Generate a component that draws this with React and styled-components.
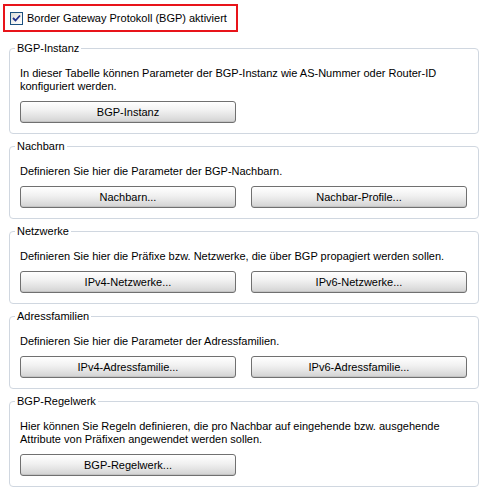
import { createGlobalStyle, styled } from "styled-components";

const GlobalStyle = createGlobalStyle`
    html, body {
        margin: 0;
        padding: 0;
        background: #ffffff;
    }
    body {
        font-family: "Liberation Sans", Arial, sans-serif;
        font-size: 11px;
        color: #000000;
    }
`

const Page = styled.div`
    width: 486px;
    height: 493px;
    padding: 4px 0 0 3px;
    box-sizing: border-box;
    display: flex;
    flex-direction: column;
    align-items: flex-start;
`

const ActivateRow = styled.label`
    display: flex;
    align-items: center;
    gap: 4px;
    width: 235px;
    height: 28px;
    box-sizing: border-box;
    padding-left: 5px;
    border: 2px solid #e8141a;
    margin-bottom: 10px;
    cursor: default;
`

const CheckBox = styled.span`
    display: inline-flex;
    align-items: center;
    justify-content: center;
    width: 13px;
    height: 13px;
    box-sizing: border-box;
    border: 1px solid #1c5180;
    background: linear-gradient(135deg, #dcdcd7 0%, #f5f5f2 60%, #ffffff 100%);
`

const Groups = styled.div`
    display: flex;
    flex-direction: column;
    gap: 6px;
    margin-left: 6px;
`

const Group = styled.fieldset`
    width: 470px;
    box-sizing: border-box;
    margin: 0;
    padding: 12px 10px 10px 10px;
    border: 1px solid #d0d7e0;
    border-radius: 4px;
`

const Title = styled.legend`
    padding: 0 2px;
    margin-left: -5px;
    line-height: 13px;
`

const Description = styled.p`
    margin: 0;
    line-height: 13px;
`

const ButtonRow = styled.div`
    display: flex;
    gap: 15px;
    margin-top: 8px;
`

const Button = styled.button`
    width: 216px;
    height: 22px;
    padding: 0;
    font-family: inherit;
    font-size: 11px;
    color: #000000;
    border: 1px solid #707070;
    border-radius: 3px;
    background: linear-gradient(#ffffff 0%, #f2f2f2 40%, #e3e3e3 70%, #d2d2d2 100%);
    box-shadow: inset 0 -1px 0 #c4c4c4;
`

const groups = [
    {
        title: "BGP-Instanz",
        text: "In dieser Tabelle können Parameter der BGP-Instanz wie AS-Nummer oder Router-ID konfiguriert werden.",
        buttons: ["BGP-Instanz"]
    },
    {
        title: "Nachbarn",
        text: "Definieren Sie hier die Parameter der BGP-Nachbarn.",
        buttons: ["Nachbarn...", "Nachbar-Profile..."]
    },
    {
        title: "Netzwerke",
        text: "Definieren Sie hier die Präfixe bzw. Netzwerke, die über BGP propagiert werden sollen.",
        buttons: ["IPv4-Netzwerke...", "IPv6-Netzwerke..."]
    },
    {
        title: "Adressfamilien",
        text: "Definieren Sie hier die Parameter der Adressfamilien.",
        buttons: ["IPv4-Adressfamilie...", "IPv6-Adressfamilie..."]
    },
    {
        title: "BGP-Regelwerk",
        text: "Hier können Sie Regeln definieren, die pro Nachbar auf eingehende bzw. ausgehende Attribute von Präfixen angewendet werden sollen.",
        buttons: ["BGP-Regelwerk..."]
    }
]

const CheckMark = () => (
    <svg width="9" height="9" viewBox="0 0 9 9">
        <path d="M1 4 L3.5 6.5 L8 1.5" fill="none" stroke="#21308c" strokeWidth="1.8" />
    </svg>
)

const App = () => {
    return (
        <>
            <GlobalStyle />
            <Page>
                <ActivateRow>
                    <CheckBox><CheckMark /></CheckBox>
                    <span>Border Gateway Protokoll (BGP) aktiviert</span>
                </ActivateRow>
                <Groups>
                    {groups.map(group => (
                        <Group key={group.title}>
                            <Title>{group.title}</Title>
                            <Description>{group.text}</Description>
                            <ButtonRow>
                                {group.buttons.map(label => (
                                    <Button key={label}>{label}</Button>
                                ))}
                            </ButtonRow>
                        </Group>
                    ))}
                </Groups>
            </Page>
        </>
    )
}

export default App;
